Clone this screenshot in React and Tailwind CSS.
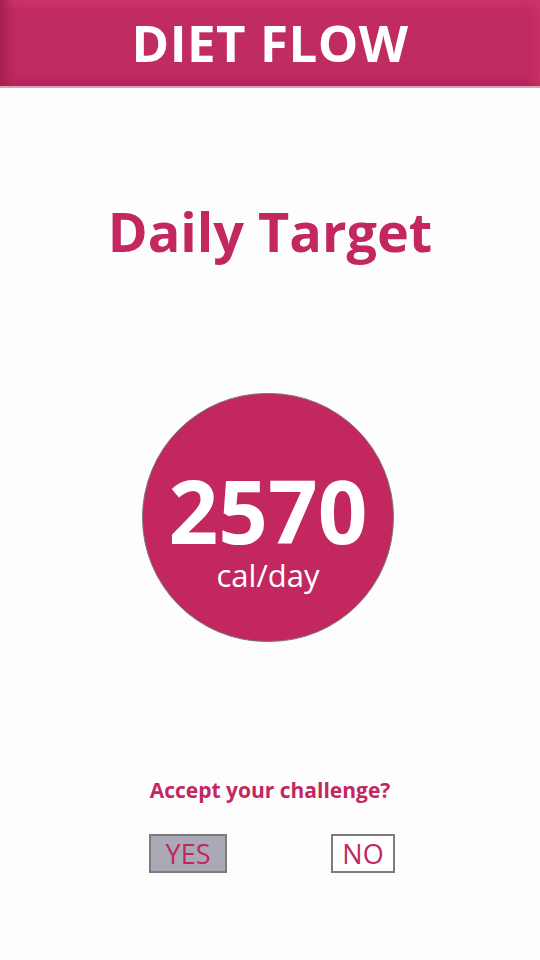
export default function App() {
  return (
    <div
      className="w-[540px] h-[960px] bg-[#fdfdfd] flex flex-col items-center"
      style={{ fontFamily: '"Open Sans", "Noto Sans", sans-serif' }}
    >
      {/* Header */}
      <div className="w-full h-[88px] bg-[#c02b62] border-b-2 border-[#d9a3b6] shadow-[inset_14px_0_12px_-8px_#a51d4f,inset_0_10px_10px_-6px_#cf3a70,inset_-10px_0_10px_-6px_#cc3369,inset_0_-10px_10px_-6px_#b6215a] flex items-center justify-center">
        <h1 className="text-[51px] font-bold text-white leading-none tracking-[0.5px] pb-[1px]">DIET FLOW</h1>
      </div>

      {/* Title */}
      <h2 className="mt-[116px] text-[54px] font-bold text-[#c2275f] leading-none">Daily Target</h2>

      {/* Circle */}
      <div className="mt-[135px] w-[252px] h-[249px] rounded-full bg-[#c2285f] border border-[#7a7a7a] flex flex-col items-center pt-[80px] -translate-x-[2px]">
        <span className="text-[87px] font-bold text-white leading-[72px]">2570</span>
        <span className="mt-[12px] text-[31px] text-white leading-[34px]">cal/day</span>
      </div>

      {/* Question */}
      <p className="mt-[138px] text-[21px] font-bold text-[#c2275f] leading-none">Accept your challenge?</p>

      {/* Buttons */}
      <div className="mt-[33px] w-[246px] flex justify-between translate-x-[2px]">
        <button className="w-[78px] h-[39px] bg-[#aaa9b6] border-2 border-[#7c7c7c] text-[27px] text-[#c2275f] leading-none flex items-center justify-center">
          YES
        </button>
        <button className="w-[64px] h-[39px] bg-white border-2 border-[#7c7c7c] text-[27px] text-[#c2275f] leading-none flex items-center justify-center">
          NO
        </button>
      </div>
    </div>
  );
}
